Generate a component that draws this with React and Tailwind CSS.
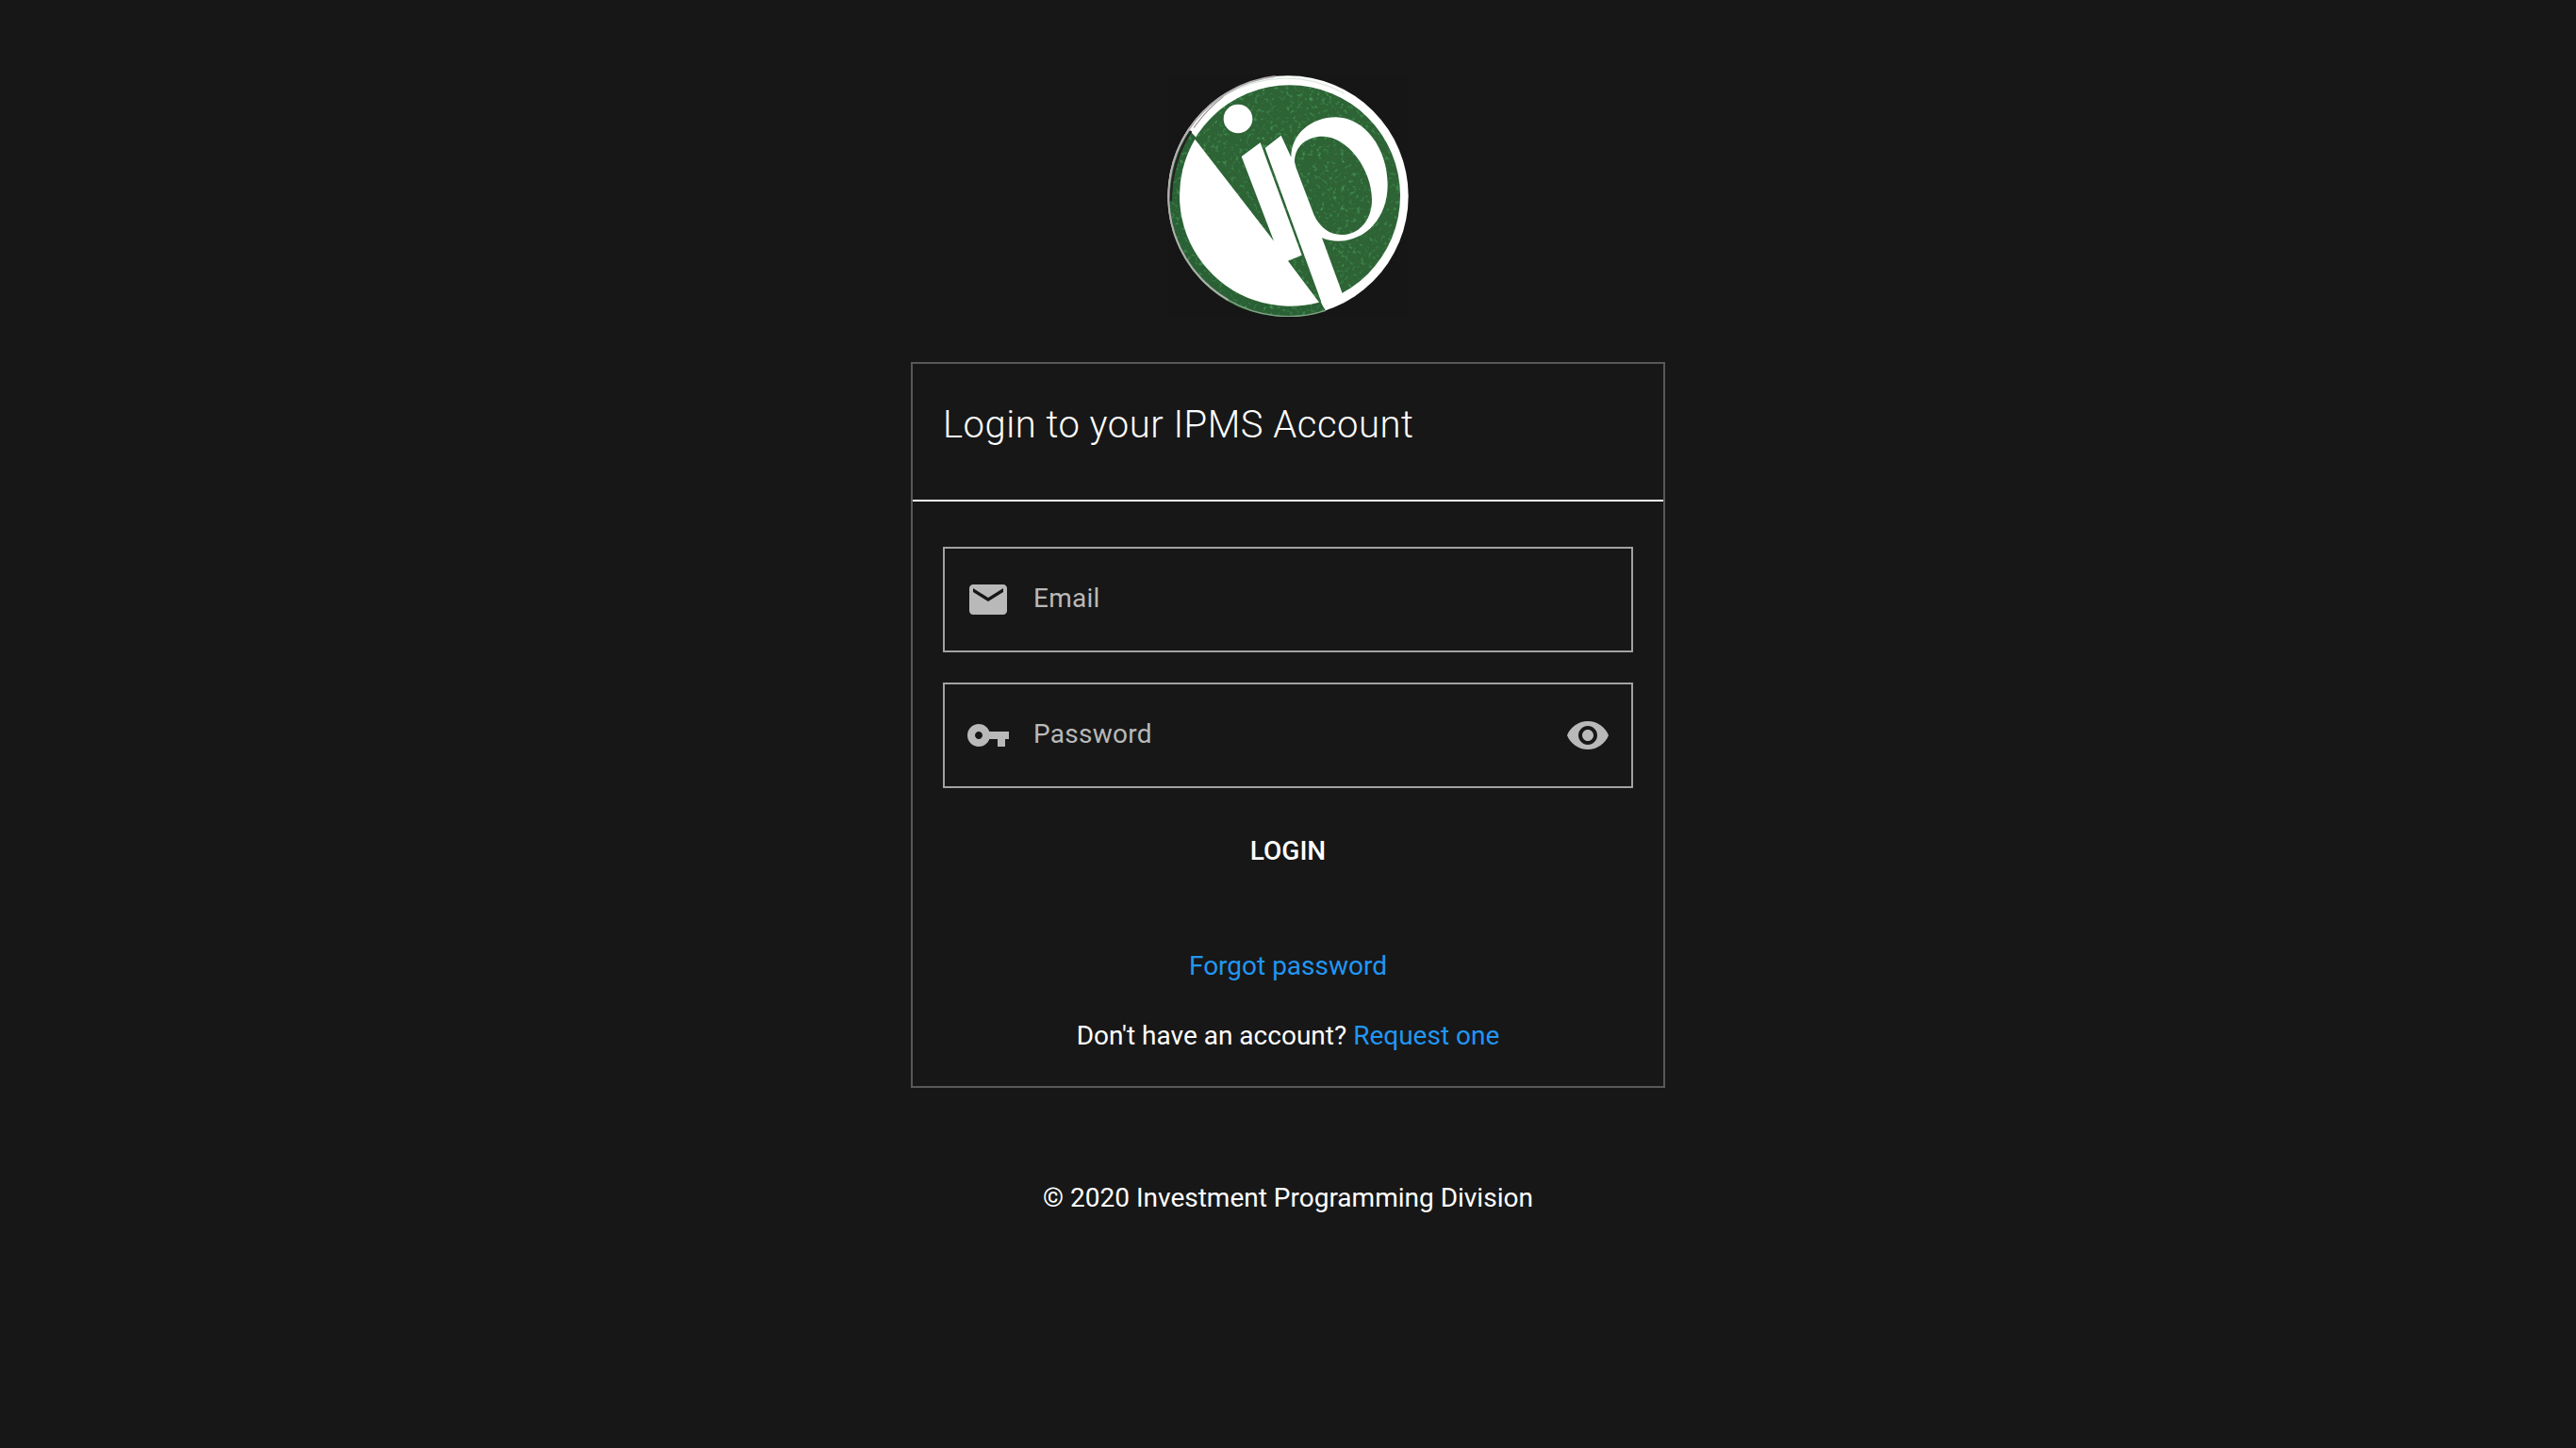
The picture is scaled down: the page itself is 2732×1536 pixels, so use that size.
function Logo() {
  return (
    <svg className="block size-64" viewBox="36 30 768 768" aria-label="IP logo">
      <defs>
        <filter id="speckle" x="0" y="0" width="100%" height="100%" colorInterpolationFilters="sRGB">
          <feTurbulence type="fractalNoise" baseFrequency="0.08" numOctaves="3" seed="7" />
          <feColorMatrix values="0 0 0 0 0.32  0 0 0 0 0.7  0 0 0 0 0.4  2.2 0 0 0 -1.25" result="n" />
          <feComposite in="n" in2="SourceGraphic" operator="in" result="s" />
          <feMerge>
            <feMergeNode in="SourceGraphic" />
            <feMergeNode in="s" />
          </feMerge>
        </filter>
        <filter id="soft">
          <feGaussianBlur stdDeviation="2" />
        </filter>
      </defs>
      <rect x="36" y="30" width="768" height="768" fill="#161616" />
      <g filter="url(#soft)">
        <circle cx="420" cy="414" r="383" fill="#fff" />
        <path d="M106 205A378 378 0 0 0 540 778L518 740L140 240Z" fill="#2b6134" filter="url(#speckle)" />
        <path d="M112 207Q50 300 47 430" fill="none" stroke="#262124" strokeWidth="7" />
        <path d="M120 197Q160 140 215 97" fill="none" stroke="#a39fa1" strokeWidth="4" />
        <path d="M215 97A375 375 0 0 1 600 88" fill="none" stroke="#d3e5d6" strokeWidth="3" />
        <path d="M380 33A382 382 0 0 0 106 200Q38 300 40 430A381 381 0 0 0 230 745" fill="none" stroke="#b3aeb1" strokeWidth="6" />
        <path d="M230 745A382 382 0 0 0 540 778" fill="none" stroke="#83a588" strokeWidth="4" />
        <circle cx="425" cy="413" r="352" fill="#2d6436" filter="url(#speckle)" />
        <path d="M124 233L375 557L272 288L332 244L464 602L420 620L519 752A352 352 0 0 1 124 233Z" fill="#fff" />
        <circle cx="261" cy="168" r="46" fill="#fff" />
        <path
          fillRule="evenodd"
          d="M347 261L398 221L430 290C430 216 495 163 572 163C665 163 737 265 737 378C737 480 670 557 580 557C560 557 543 554 528 547L594 727L600 745L540 778L530 762ZM441 305C441 255 480 224 530 224C610 224 687 330 687 425C687 492 645 537 590 537C550 537 521 512 503 475L446 325Z"
          fill="#fff"
        />
      </g>
    </svg>
  );
}

function Icon({ d }) {
  return (
    <svg className="size-12 shrink-0 fill-[#b9b9b9]" viewBox="0 0 24 24">
      <path d={d} />
    </svg>
  );
}

const MAIL = "M20 4H4c-1.1 0-1.99.9-1.99 2L2 18c0 1.1.9 2 2 2h16c1.1 0 2-.9 2-2V6c0-1.1-.9-2-2-2zm0 4l-8 5-8-5V6l8 5 8-5v2z";
const KEY = "M12.65 10C11.83 7.67 9.61 6 7 6c-3.31 0-6 2.69-6 6s2.69 6 6 6c2.61 0 4.83-1.67 5.65-4H17v4h4v-4h2v-4H12.65zM7 14c-1.1 0-2-.9-2-2s.9-2 2-2 2 .9 2 2-.9 2-2 2z";
const EYE = "M12 4.5C7 4.5 2.73 7.61 1 12c1.73 4.39 6 7.5 11 7.5s9.27-3.11 11-7.5c-1.73-4.39-6-7.5-11-7.5zM12 17c-2.76 0-5-2.24-5-5s2.24-5 5-5 5 2.24 5 5-2.24 5-5 5zm0-8c-1.66 0-3 1.34-3 3s1.34 3 3 3 3-1.34 3-3-1.34-3-3-3z";

function Field({ icon, label, trailing }) {
  return (
    <label className="flex h-28 items-center border-2 border-[#a2a2a2] px-[22px]">
      <Icon d={icon} />
      <span className="-mt-0.5 ml-6 flex-1 tracking-[0.00937em] text-[#b9b9b9]">{label}</span>
      {trailing && <Icon d={trailing} />}
    </label>
  );
}

export default function App() {
  return (
    <div className="flex h-[1536px] w-full flex-col items-center bg-[#171717] pt-20 font-['Roboto',sans-serif] text-[28px] leading-[42px] text-white">
      <Logo />
      <main className="mt-12 flex h-[770px] w-[800px] flex-col border-2 border-[#585858]">
        <header className="h-[146px] border-b-2 border-white px-8 pt-[33px]">
          <h1 className="text-[40px] leading-[64px] font-light tracking-[0.0125em]">Login to your IPMS Account</h1>
        </header>
        <form className="flex flex-col gap-8 px-8 pt-12">
          <Field icon={MAIL} label="Email" />
          <Field icon={KEY} label="Password" trailing={EYE} />
        </form>
        <button className="mt-[46px] self-center font-medium">LOGIN</button>
        <a className="mt-20 self-center text-[#2196f3]">Forgot password</a>
        <p className="mt-8 self-center">
          Don't have an account? <a className="text-[#2196f3]">Request one</a>
        </p>
      </main>
      <footer className="mt-24">© 2020 Investment Programming Division</footer>
    </div>
  );
}
